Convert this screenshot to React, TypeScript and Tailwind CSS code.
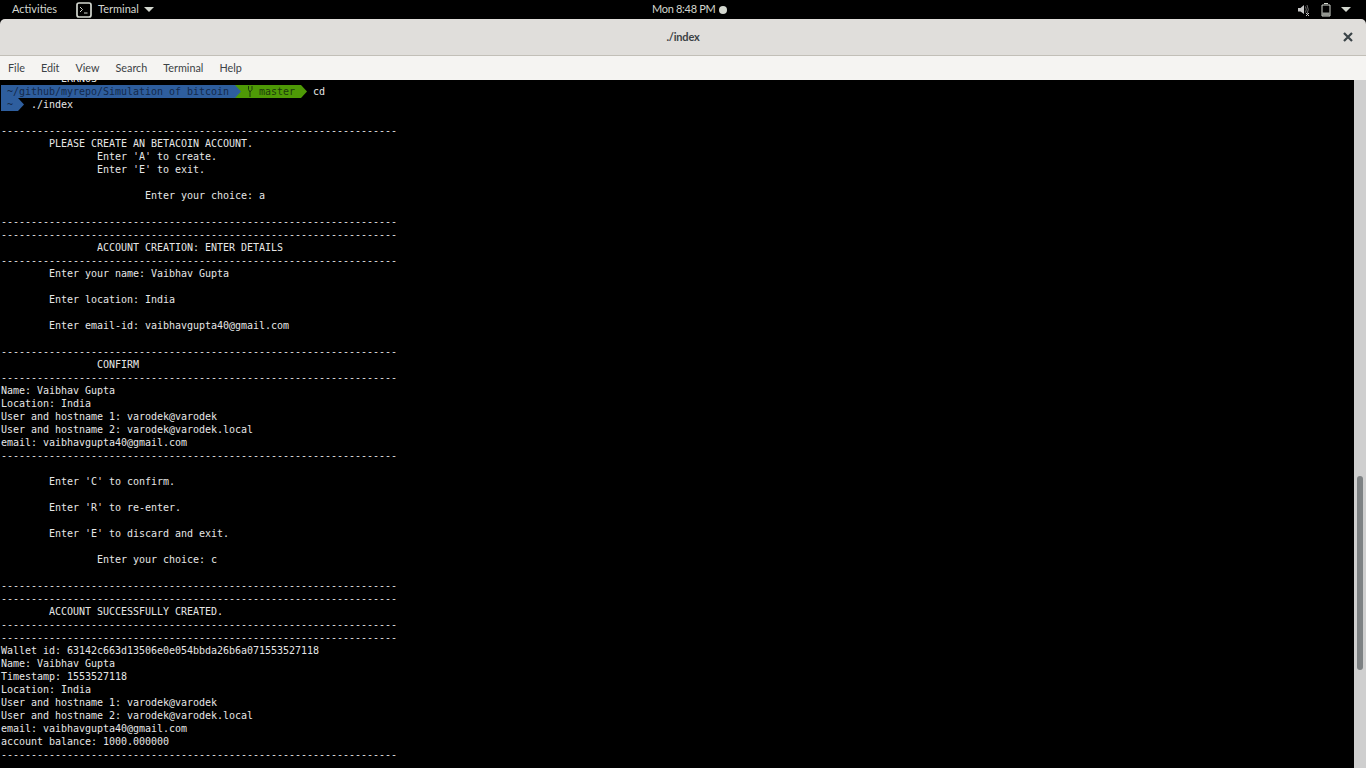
import React from "react";

const DASH = "-".repeat(66);
const lines: string[] = [
  "",
  DASH,
  "        PLEASE CREATE AN BETACOIN ACCOUNT.",
  "                Enter 'A' to create.",
  "                Enter 'E' to exit.",
  "",
  "                        Enter your choice: a",
  "",
  DASH,
  DASH,
  "                ACCOUNT CREATION: ENTER DETAILS",
  DASH,
  "        Enter your name: Vaibhav Gupta",
  "",
  "        Enter location: India",
  "",
  "        Enter email-id: vaibhavgupta40@gmail.com",
  "",
  DASH,
  "                CONFIRM",
  DASH,
  "Name: Vaibhav Gupta",
  "Location: India",
  "User and hostname 1: varodek@varodek",
  "User and hostname 2: varodek@varodek.local",
  "email: vaibhavgupta40@gmail.com",
  DASH,
  "",
  "        Enter 'C' to confirm.",
  "",
  "        Enter 'R' to re-enter.",
  "",
  "        Enter 'E' to discard and exit.",
  "",
  "                Enter your choice: c",
  "",
  DASH,
  DASH,
  "        ACCOUNT SUCCESSFULLY CREATED.",
  DASH,
  DASH,
  "Wallet id: 63142c663d13506e0e054bbda26b6a071553527118",
  "Name: Vaibhav Gupta",
  "Timestamp: 1553527118",
  "Location: India",
  "User and hostname 1: varodek@varodek",
  "User and hostname 2: varodek@varodek.local",
  "email: vaibhavgupta40@gmail.com",
  "account balance: 1000.000000",
  DASH,
];

const MENU = ["File", "Edit", "View", "Search", "Terminal", "Help"];

function Caret({ className }: { className: string }) {
  return (
    <svg width="10" height="5" viewBox="0 0 10 5" className={className}>
      <path d="M0 0h10L5 5z" fill="currentColor" />
    </svg>
  );
}

export default function App() {
  return (
    <div className="h-[768px] w-[1366px] overflow-hidden bg-black font-['Lato',sans-serif]">
      {/* GNOME top bar */}
      <div className="relative flex h-[19px] items-center bg-black text-[11px] text-[#d3d7cf]">
        <span className="ml-3 w-[64px]">Activities</span>
        <svg width="16" height="16" viewBox="0 0 16 16" className="text-[#d3d7cf]">
          <rect x="1" y="1" width="14" height="14" rx="2" fill="none" stroke="currentColor" strokeWidth="1.7" />
          <path d="M4 5l2.500 2.500L4 10M8 11h3.500" fill="none" stroke="currentColor" strokeWidth="1" />
        </svg>
        <span className="ml-[6px]">Terminal</span>
        <Caret className="ml-[5px] text-[#d3d7cf]" />
        <div className="absolute left-[652px] top-0 flex h-[19px] items-center tracking-[-0.3px]">
          <span>Mon&nbsp;8:48 PM</span>
          <span className="ml-[4px] h-[8px] w-[8px] rounded-full bg-[#d3d7cf]" />
        </div>
        <div className="ml-auto mr-[15px] flex items-center">
          <svg width="14" height="14" viewBox="0 0 14 14" className="text-[#c8c8c8]">
            <path d="M1 5h2.500L7 2v9L3.500 8.500H1z" fill="currentColor" />
            <path d="M8.500 3.500q1.500 3 0 6M10 2q2.500 4.500 0 9" fill="none" stroke="currentColor" strokeWidth="1" opacity="0.55" />
            <path d="M9 10l3 3M12 10l-3 3" stroke="currentColor" strokeWidth="1" />
          </svg>
          <svg width="12" height="15" viewBox="0 0 12 15" className="ml-[9px] text-[#d3d7cf]">
            <path d="M4 1.500h4M2 3h8v11H2z" fill="none" stroke="currentColor" strokeWidth="1" />
            <rect x="2.500" y="10.500" width="7" height="3" fill="currentColor" opacity="0.7" />
          </svg>
          <Caret className="ml-[9px] text-[#d3d7cf]" />
        </div>
      </div>

      {/* Title bar */}
      <div className="relative flex h-[37px] items-center justify-center rounded-t-[5px] border-b border-[#c2bfb8] bg-[#e0dedb] text-[11px] font-bold tracking-[-0.2px] text-[#3c4245]">
        ./index
        <svg width="10" height="10" viewBox="0 0 10 10" className="absolute right-[13px] top-[13px] text-[#3a4347]">
          <path d="M1 1l8 8M9 1l-8 8" stroke="currentColor" strokeWidth="2.200" />
        </svg>
      </div>

      {/* Menu bar */}
      <div className="flex h-[24px] items-center gap-[16px] bg-[#f5f4f2] pl-2 text-[10.800px] text-[#3c4245]">
        {MENU.map((m) => (
          <span key={m}>{m}</span>
        ))}
      </div>

      {/* Terminal */}
      <div className="flex h-[688px]">
        <div className="w-[1354px] overflow-hidden bg-black pl-px font-['DejaVu_Sans_Mono',monospace] text-[10px] leading-[13px] tracking-[-0.02px] text-[#e6e6e6]">
          <div className="-mt-[8px] h-[13px] whitespace-pre">        - ERRNOS</div>
          <div className="flex h-[13px] items-center whitespace-pre">
            <span className="flex h-[13px] items-center bg-[#2e5e9e] px-[6px] text-[#14294a]">~/github/myrepo/Simulation of bitcoin</span>
            <svg width="6" height="13" viewBox="0 0 6 13" className="bg-[#4e9a06]"><path d="M0 0l6 6.500L0 13z" fill="#2e5e9e" /></svg>
            <span className="flex h-[13px] items-center bg-[#4e9a06] pl-[6px] pr-[6px] text-[#1c3a0c]">
              <svg width="6" height="13" viewBox="0 0 6 13" className="text-[#1c3a0c]">
                <path d="M1.500 1v3.500L3 7v5M5 1v3.500L3 7" fill="none" stroke="currentColor" strokeWidth="1" />
              </svg>
              {" master"}
            </span>
            <svg width="6" height="13" viewBox="0 0 6 13"><path d="M0 0l6 6.500L0 13z" fill="#4e9a06" /></svg>
            <span className="ml-[6px]">cd</span>
          </div>
          <div className="flex h-[13px] items-center whitespace-pre">
            <span className="flex h-[13px] w-[17px] items-center bg-[#2e5e9e] pl-[6px] text-[#14294a]">~</span>
            <svg width="6" height="13" viewBox="0 0 6 13"><path d="M0 0l6 6.500L0 13z" fill="#2e5e9e" /></svg>
            <span className="ml-[7px]">./index</span>
          </div>
          <div className="whitespace-pre">
            {lines.map((l, i) => (
              <div key={i} className="h-[13px]">{l}</div>
            ))}
          </div>
        </div>
        {/* Scrollbar */}
        <div className="flex w-[12px] flex-col bg-[#cfcfcf] pl-[3px] pt-[396px]">
          <div className="h-[194px] w-[6px] rounded-[3px] bg-[#7d8183]" />
        </div>
      </div>
    </div>
  );
}
